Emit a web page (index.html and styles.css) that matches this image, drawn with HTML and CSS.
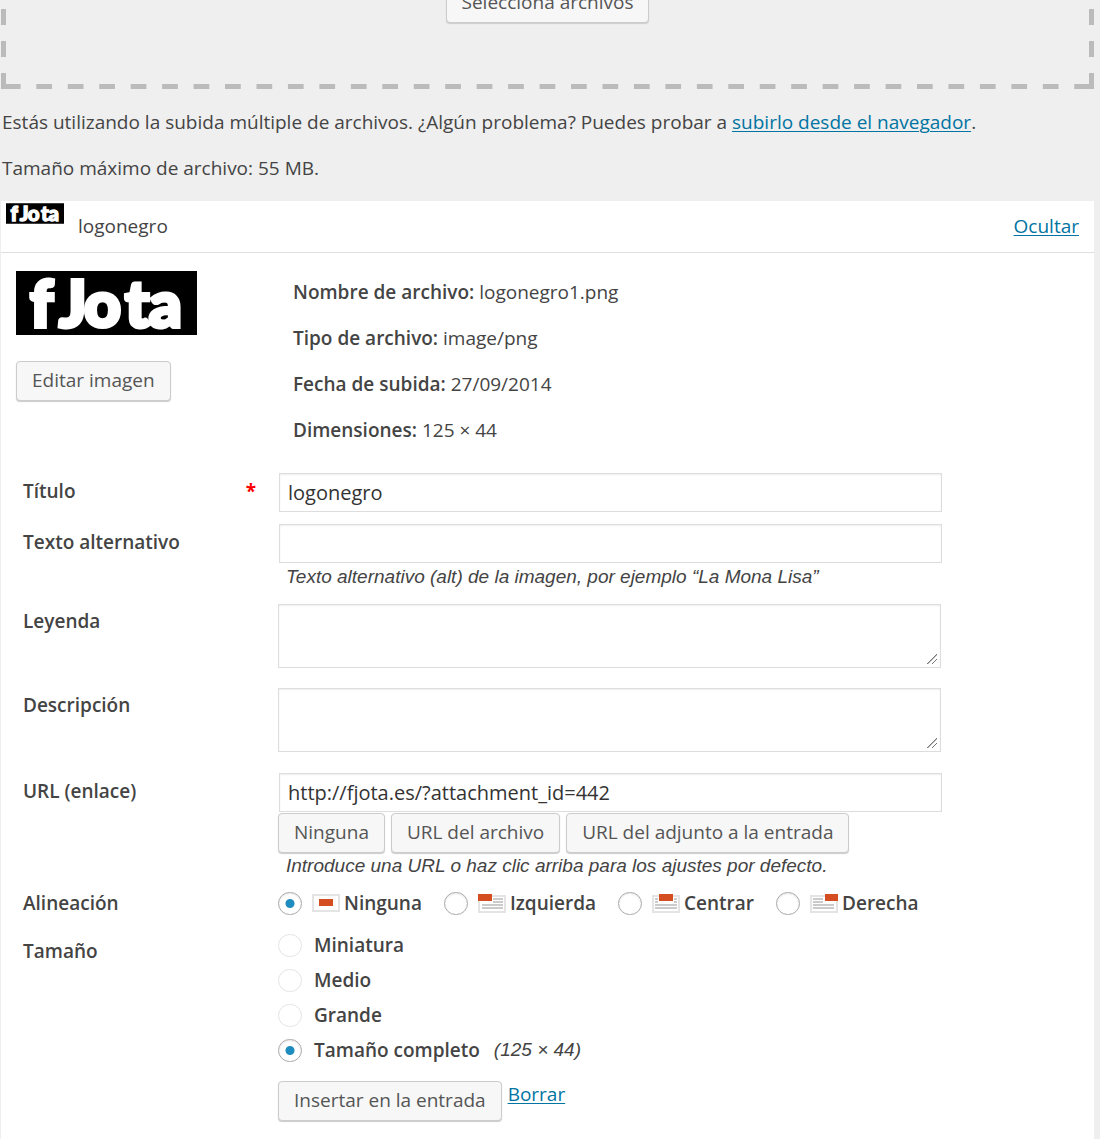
FILE: index.html
```html
<!DOCTYPE html>
<html lang="es">

<head>
    <meta charset="UTF-8">
    <meta name="viewport" content="width=device-width, initial-scale=1.0">
    <title>Subir archivos</title>
    <link rel="stylesheet" href="styles.css">
</head>

<body>
    <div class="drop-zone">
        <button type="button" class="button">Selecciona archivos</button>
    </div>

    <p class="note">Estás utilizando la subida múltiple de archivos. ¿Algún problema? Puedes probar a <a href="#">subirlo desde el navegador</a>.</p>
    <p class="note">Tamaño máximo de archivo: 55 MB.</p>

    <form class="media-item">
        <div class="media-head">
            <svg class="thumb" viewBox="0 0 181 64" role="img" aria-label="fJota">
                <rect width="181" height="64" fill="#000" />
                <text class="logo-text" x="14 43 68 109 133" y="56">fJota</text>
            </svg>
            <span class="filename">logonegro</span>
            <a href="#">Ocultar</a>
        </div>

        <div class="media-info">
            <div class="preview">
                <svg class="logo" viewBox="0 0 181 64" role="img" aria-label="fJota">
                    <rect width="181" height="64" fill="#000" />
                    <text class="logo-text" x="14 43 68 109 133" y="56">fJota</text>
                </svg>
                <button type="button" class="button">Editar imagen</button>
            </div>
            <div class="details">
                <p><strong>Nombre de archivo:</strong> logonegro1.png</p>
                <p><strong>Tipo de archivo:</strong> image/png</p>
                <p><strong>Fecha de subida:</strong> 27/09/2014</p>
                <p><strong>Dimensiones:</strong> 125 × 44</p>
            </div>
        </div>

        <div class="row">
            <label class="name" for="title">Título <span class="required">*</span></label>
            <div class="field">
                <input type="text" class="text" id="title" value="logonegro">
            </div>
        </div>

        <div class="row">
            <label class="name" for="alt">Texto alternativo</label>
            <div class="field">
                <input type="text" class="text" id="alt">
                <p class="help">Texto alternativo (alt) de la imagen, por ejemplo “La Mona Lisa”</p>
            </div>
        </div>

        <div class="row row-area">
            <label class="name" for="caption">Leyenda</label>
            <div class="field">
                <textarea id="caption"></textarea>
            </div>
        </div>

        <div class="row row-area">
            <label class="name" for="description">Descripción</label>
            <div class="field">
                <textarea id="description"></textarea>
            </div>
        </div>

        <div class="row row-url">
            <label class="name" for="url">URL (enlace)</label>
            <div class="field">
                <input type="text" class="text" id="url" value="http://fjota.es/?attachment_id=442">
                <div class="buttons">
                    <button type="button" class="button">Ninguna</button>
                    <button type="button" class="button">URL del archivo</button>
                    <button type="button" class="button">URL del adjunto a la entrada</button>
                </div>
                <p class="help">Introduce una URL o haz clic arriba para los ajustes por defecto.</p>
            </div>
        </div>

        <div class="row row-align" role="radiogroup" aria-labelledby="align-name">
            <span class="name" id="align-name">Alineación</span>
            <div class="field align">
                <label>
                    <input type="radio" name="align" checked>
                    <svg class="icon" viewBox="0 0 28 19" aria-hidden="true">
                        <rect class="frame" x="1" y="1" width="26" height="16" />
                        <rect class="block" x="7" y="5" width="14" height="7" />
                    </svg>
                    Ninguna
                </label>
                <label>
                    <input type="radio" name="align">
                    <svg class="icon" viewBox="0 0 28 19" aria-hidden="true">
                        <rect class="frame" x="1" y="2" width="26" height="16" />
                        <path class="lines" d="M15 5h10M15 8h10M4 11h21M4 14h21" />
                        <rect class="block" x="0" y="0" width="14" height="7" />
                    </svg>
                    Izquierda
                </label>
                <label>
                    <input type="radio" name="align">
                    <svg class="icon" viewBox="0 0 28 19" aria-hidden="true">
                        <rect class="frame" x="1" y="2" width="26" height="16" />
                        <path class="lines" d="M3 5h3M22 5h3M3 8h3M22 8h3M3 11h22M3 14h22" />
                        <rect class="block" x="7" y="0" width="14" height="7" />
                    </svg>
                    Centrar
                </label>
                <label>
                    <input type="radio" name="align">
                    <svg class="icon" viewBox="0 0 28 19" aria-hidden="true">
                        <rect class="frame" x="1" y="2" width="26" height="16" />
                        <path class="lines" d="M3 5h10M3 8h10M3 11h21M3 14h21" />
                        <rect class="block" x="15" y="0" width="13" height="7" />
                    </svg>
                    Derecha
                </label>
            </div>
        </div>

        <div class="row row-size" role="radiogroup" aria-labelledby="size-name">
            <span class="name" id="size-name">Tamaño</span>
            <div class="field sizes">
                <label><input type="radio" name="size" disabled> Miniatura</label>
                <label><input type="radio" name="size" disabled> Medio</label>
                <label><input type="radio" name="size" disabled> Grande</label>
                <label><input type="radio" name="size" checked> Tamaño completo <span class="dimensions">(125 × 44)</span></label>
            </div>
        </div>

        <div class="row">
            <div class="field actions">
                <button type="button" class="button">Insertar en la entrada</button>
                <a href="#">Borrar</a>
            </div>
        </div>
    </form>
</body>

</html>
```
FILE: styles.css
```css
* {
    box-sizing: border-box;
}

body {
    margin: 0 6px 0 1px;
    background-color: #efefef;
    color: #444;
    font-family: "Open Sans", sans-serif;
    font-size: 19px;
    line-height: 26px;
    overflow-x: hidden;
}

p {
    margin: 20px 0;
}

.note {
    padding-left: 1px;
}

strong {
    font-weight: 600;
}

a {
    color: #0074a2;
    text-underline-offset: 2px;
    text-decoration-thickness: 1px;
}

/* The side borders are transparent so the dashes get cut at the corners */
.drop-zone {
    display: flex;
    justify-content: center;
    margin: -17px -4px 0;
    padding-bottom: 66px;
    border: solid transparent;
    border-width: 0 4px;
    background-image:
        linear-gradient(90deg, transparent 25%, #bbb 25% 75%, transparent 75%),
        linear-gradient(transparent 50%, #bbb 50%),
        linear-gradient(transparent 50%, #bbb 50%);
    background-size: calc(100% / 35) 5px, 5px 32px, 5px 32px;
    background-position: left bottom, left bottom, right bottom;
    background-repeat: repeat-x, repeat-y, repeat-y;
    background-origin: border-box, padding-box, padding-box;
    background-clip: padding-box;
}

.button {
    height: 40px;
    padding: 0 15px 2px;
    border: 1px solid #ccc;
    border-radius: 4px;
    background-color: #f7f7f7;
    box-shadow: 0 1px 1px #ccc;
    color: #555;
    font-family: inherit;
    font-size: 19px;
    line-height: 26px;
    white-space: nowrap;
    cursor: pointer;
}

.media-item {
    padding-bottom: 8px;
    background-color: #fff;
}

.media-head {
    display: flex;
    align-items: flex-start;
    height: 52px;
    padding: 2px 15px 0 5px;
    border-bottom: 1px solid #dfdfdf;
}

.thumb {
    width: 58px;
    height: 21px;
}

.filename {
    flex: 1;
    padding-left: 14px;
}

.filename,
.media-head a {
    margin-top: 10px;
}

.thumb,
.logo {
    overflow: visible;
}

.logo-text {
    fill: #fff;
    stroke: #fff;
    stroke-width: 4px;
    font-family: Lato, sans-serif;
    font-size: 64px;
    font-weight: 900;
}

.media-info {
    display: flex;
    margin-bottom: 9px;
    padding: 18px 15px 0;
}

.preview {
    display: flex;
    flex-direction: column;
    align-items: flex-start;
    gap: 26px;
    width: 277px;
}

.logo {
    width: 181px;
    height: 64px;
}

.details {
    padding-top: 8px;
}

.details p {
    margin: 0 0 20px;
}

.row {
    display: grid;
    grid-template-columns: 255px minmax(0, 665px);
    margin-bottom: 10px;
    padding-left: 22px;
}

.name {
    display: flex;
    justify-content: space-between;
    padding: 6px 22px 0 0;
    font-weight: 600;
}

.required {
    color: #f00;
    font-weight: 700;
}

.field {
    grid-column: 2;
}

.text,
textarea {
    display: block;
    border: 1px solid #ddd;
    background-color: #fff;
    box-shadow: inset 0 1px 2px rgba(0, 0, 0, 0.07);
    color: #333;
    font-family: inherit;
    font-size: 20px;
}

.text {
    width: calc(100% - 2px);
    height: 39px;
    margin: 1px;
    padding: 2px 8px;
}

textarea {
    width: calc(100% - 2px);
    height: 64px;
    padding: 4px 8px;
    resize: both;
}

textarea::-webkit-resizer {
    background: linear-gradient(135deg, transparent 48%, #777 50% 54%, transparent 56% 70%, #777 72% 76%, transparent 78%) 2px 2px / 10px 10px no-repeat;
}

.help,
.dimensions {
    font-family: "Liberation Sans", sans-serif;
    font-style: italic;
    font-weight: 400;
}

.help {
    margin: 0 8px 4px;
}

.row-area {
    margin-bottom: 20px;
}

.row-area .name {
    padding-top: 4px;
}

.row-url {
    margin-bottom: 7px;
}

.row-align {
    margin-bottom: 16px;
}

.row-align .name {
    padding-top: 0;
}

.row-size {
    margin-bottom: 18px;
}

.buttons {
    display: flex;
    gap: 6px;
}

.align {
    display: flex;
    gap: 22px;
}

.align label,
.sizes label {
    display: flex;
    align-items: center;
    font-weight: 600;
}

.icon {
    width: 28px;
    height: 19px;
    margin: 0 4px 0 10px;
}

.frame {
    fill: #fff;
    stroke: #e4e4e4;
    stroke-width: 2;
}

.lines {
    fill: none;
    stroke: #bbb;
    stroke-width: 1.5;
}

.block {
    fill: #d54e21;
}

input[type="radio"] {
    appearance: none;
    width: 24px;
    height: 23px;
    margin: 0;
    border: 1px solid #aaa;
    border-radius: 12px;
    background-color: #fff;
    box-shadow: inset 0 1px 2px rgba(0, 0, 0, 0.1);
}

input[type="radio"]:checked {
    background-image: radial-gradient(circle, #1e8cbe 4px, transparent 5px);
}

input[type="radio"]:disabled {
    border-color: #e4e4e4;
    box-shadow: none;
}

.sizes {
    display: flex;
    flex-direction: column;
    gap: 9px;
}

.sizes input {
    margin-right: 12px;
}

.dimensions {
    margin-left: 14px;
}

.actions {
    display: flex;
    gap: 6px;
}
```
